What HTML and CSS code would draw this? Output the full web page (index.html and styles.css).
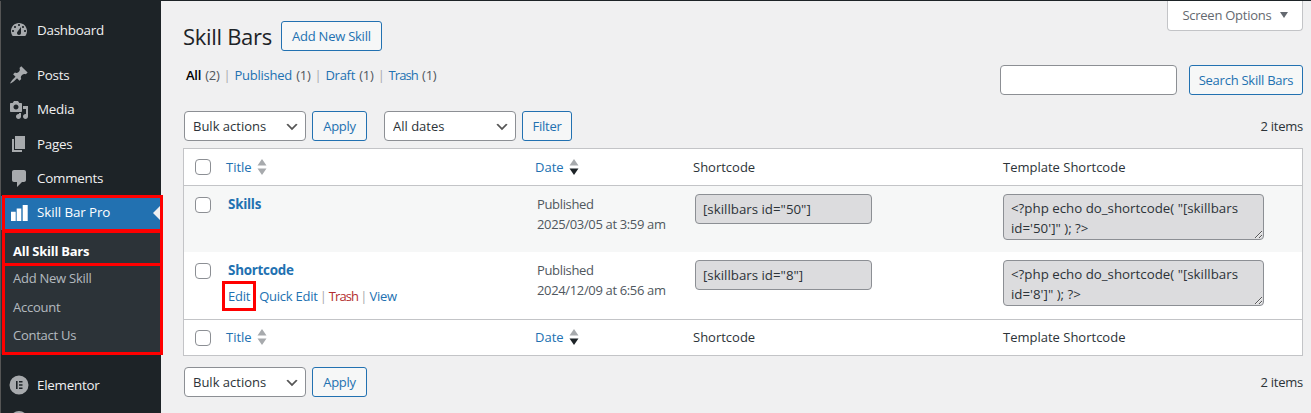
FILE: index.html
```html
<!DOCTYPE html>
<html lang="en">
<head>
<meta charset="utf-8">
<title>Skill Bars</title>
<link rel="stylesheet" href="styles.css">
</head>
<body>
<div class="shell">
  <nav class="sidebar">
    <ul class="menu">
      <li class="item first"><svg class="ico" viewBox="0 0 20 20"><path fill-rule="evenodd" d="M3.76 16h12.48c1.1-1.37 1.76-3.11 1.76-5 0-4.42-3.58-8-8-8s-8 3.58-8 8c0 1.89.66 3.63 1.76 5zM10 4c.55 0 1 .45 1 1s-.45 1-1 1-1-.45-1-1 .45-1 1-1zM6 6c.55 0 1 .45 1 1s-.45 1-1 1-1-.45-1-1 .45-1 1-1zm8 0c.55 0 1 .45 1 1s-.45 1-1 1-1-.45-1-1 .45-1 1-1zm-5.37 5.55L12 7v6c0 1.1-.9 2-2 2s-2-.9-2-2c0-.57.24-1.08.63-1.45zM4 10c.55 0 1 .45 1 1s-.45 1-1 1-1-.45-1-1 .45-1 1-1zm12 0c.55 0 1 .45 1 1s-.45 1-1 1-1-.45-1-1 .45-1 1-1z"/></svg><span>Dashboard</span></li>
      <li class="item gap"><svg class="ico" viewBox="0 0 20 20"><path d="M10.44 3.02l1.82-1.82 6.36 6.35-1.83 1.82c-1.05-.68-2.48-.57-3.41.36l-.75.75c-.92.93-1.04 2.35-.35 3.41l-1.83 1.82-2.41-2.41-2.8 2.79c-.42.42-3.38 2.71-3.8 2.29s1.86-3.39 2.28-3.81l2.79-2.79L4.1 9.36l1.83-1.82c1.05.69 2.48.57 3.4-.36l.75-.75c.93-.92 1.05-2.35.36-3.41z"/></svg><span>Posts</span></li>
      <li class="item"><svg class="ico" viewBox="0 0 20 20"><path fill-rule="evenodd" d="M13 11V4c0-.55-.45-1-1-1h-1.67L9 1H5L3.67 3H2c-.55 0-1 .45-1 1v7c0 .55.45 1 1 1h10c.55 0 1-.45 1-1zM7 4.500c1.38 0 2.5 1.12 2.5 2.5S8.38 9.500 7 9.500 4.500 8.38 4.500 7 5.620 4.500 7 4.500zM14 6h5v10.500c0 1.38-1.12 2.5-2.5 2.5S14 17.880 14 16.500s1.120-2.500 2.500-2.500c.17 0 .34.02.5.05V9h-3V6zm-4 8.050V13h2v3.500c0 1.380-1.120 2.500-2.500 2.500S7 17.880 7 16.500 8.120 14 9.500 14c.17 0 .34.020.5.050z"/></svg><span>Media</span></li>
      <li class="item"><svg class="ico" viewBox="0 0 20 20"><path d="M6 15V2h10v13H6zm-1 1h8v2H3V5h2v11z"/></svg><span>Pages</span></li>
      <li class="item"><svg class="ico" viewBox="0 0 20 20"><path d="M5 2h10c1.1 0 2 .9 2 2v8c0 1.1-.9 2-2 2h-2l-5 5v-5H5c-1.1 0-2-.9-2-2V4c0-1.1.9-2 2-2z"/></svg><span>Comments</span></li>
      <li class="item current"><svg class="ico" viewBox="0 0 20 20"><path d="M2 8.700h4.700V18H2zM7.700 5.600h4.600V18H7.700zM13.700 2h5v16h-5z"/></svg><span class="wide">Skill Bar Pro</span></li>
      <li class="submenu">
        <ul>
          <li class="sub active">All Skill Bars</li>
          <li class="sub">Add New Skill</li>
          <li class="sub">Account</li>
          <li class="sub">Contact Us</li>
        </ul>
      </li>
      <li class="item after-sub"><svg class="ico" viewBox="0 0 20 20"><path fill-rule="evenodd" d="M10 .5a9.500 9.500 0 1 0 0 19 9.500 9.500 0 0 0 0-19zM7 6h1.600v8H7zM10 6h3.500v1.600H10zM10 9.200h3.500v1.600H10zM10 12.400h3.500V14H10z"/></svg><span>Elementor</span></li>
      <li class="item"><svg class="ico" viewBox="0 0 20 20"><circle cx="10" cy="10" r="9"/></svg><span></span></li>
    </ul>
  </nav>

  <main class="content">
    <div class="screen-tab">Screen Options <i class="tri"></i></div>

    <header class="heading">
      <h1>Skill Bars</h1>
      <a class="btn add-new">Add New Skill</a>
    </header>

    <div class="views-row">
      <ul class="views">
        <li><b>All</b> <em>(2)</em></li>
        <li><a>Published</a> <em>(1)</em></li>
        <li><a>Draft</a> <em>(1)</em></li>
        <li><a class="narrow">Trash</a> <em>(1)</em></li>
      </ul>
      <form class="search">
        <input class="field search-input" type="text" aria-label="Search">
        <a class="btn search-btn">Search Skill Bars</a>
      </form>
    </div>

    <div class="tablenav top">
      <select class="field select bulk"><option>Bulk actions</option></select>
      <a class="btn apply">Apply</a>
      <select class="field select dates"><option>All dates</option></select>
      <a class="btn filter">Filter</a>
      <span class="count">2 items</span>
    </div>

    <table class="list">
      <colgroup><col class="c-cb"><col class="c-title"><col class="c-date"><col class="c-code"><col class="c-tpl"></colgroup>
      <thead>
        <tr>
          <td class="cb"><span class="check"></span></td>
          <th><a>Title</a><svg class="sort" viewBox="0 0 10 16"><path class="off" d="M5 0l4.500 6.500H.5zM5 16L.5 9.500h9z"/></svg></th>
          <th><a>Date</a><svg class="sort" viewBox="0 0 10 16"><path class="off" d="M5 0l4.500 6.500H.5z"/><path class="on" d="M5 16L.5 9.500h9z"/></svg></th>
          <th>Shortcode</th>
          <th>Template Shortcode</th>
        </tr>
      </thead>
      <tbody>
        <tr class="alt">
          <td class="cb"><span class="check"></span></td>
          <td class="name"><a class="row-title">Skills</a></td>
          <td class="date">Published<br>2025/03/05 at 3:59 am</td>
          <td><input class="code" type="text" readonly value='[skillbars id="50"]'></td>
          <td><textarea class="tpl" readonly>&lt;?php echo do_shortcode( "[skillbars
id='50']" ); ?&gt;</textarea></td>
        </tr>
        <tr class="second">
          <td class="cb"><span class="check"></span></td>
          <td class="name">
            <a class="row-title">Shortcode</a>
            <div class="actions"><a class="edit">Edit</a> <a>Quick Edit</a> <s>|</s> <a class="trash narrow">Trash</a> <s>|</s> <a>View</a></div>
          </td>
          <td class="date">Published<br>2024/12/09 at 6:56 am</td>
          <td><input class="code" type="text" readonly value='[skillbars id="8"]'></td>
          <td><textarea class="tpl" readonly>&lt;?php echo do_shortcode( "[skillbars
id='8']" ); ?&gt;</textarea></td>
        </tr>
      </tbody>
      <tfoot>
        <tr>
          <td class="cb"><span class="check"></span></td>
          <th><a>Title</a><svg class="sort" viewBox="0 0 10 16"><path class="off" d="M5 0l4.500 6.500H.5zM5 16L.5 9.500h9z"/></svg></th>
          <th><a>Date</a><svg class="sort" viewBox="0 0 10 16"><path class="off" d="M5 0l4.500 6.500H.5z"/><path class="on" d="M5 16L.5 9.500h9z"/></svg></th>
          <th>Shortcode</th>
          <th>Template Shortcode</th>
        </tr>
      </tfoot>
    </table>

    <div class="tablenav bottom">
      <select class="field select bulk"><option>Bulk actions</option></select>
      <a class="btn apply">Apply</a>
      <span class="count">2 items</span>
    </div>
  </main>
</div>
</body>
</html>
```
FILE: styles.css
```css
* { box-sizing: border-box; }
html, body { margin: 0; height: 100%; overflow: hidden; }
body {
  background: #f0f0f1;
  color: #2c3338;
  font: 13px/1.4 "Open Sans", "Liberation Sans", sans-serif;
  letter-spacing: -0.25px;
}
ul { list-style: none; margin: 0; padding: 0; }
a { color: #2271b1; }
.narrow { letter-spacing: -0.9px; }
.wide { letter-spacing: -0.1px; }

.shell { display: flex; height: 413px; border-top: 1px solid #1d2327; overflow: hidden; }

/* sidebar */
.sidebar { width: 161px; flex: none; background: #1d2327; border-left: 1px solid #555; color: #f0f0f1; position: relative; }
.menu { padding-top: 12px; }
.item { display: flex; align-items: center; height: 34.33px; font-size: 13.4px; position: relative; }
.item.gap { margin-top: 11px; }
.item .ico { width: 20px; height: 20px; margin: 0 8px 0 8px; flex: none; fill: #a7aaad; }
.item.current { background: #2271b1; color: #fff; }
.item.current .ico { fill: #fff; }
.item.current::before {
  content: ""; position: absolute; right: 0; top: 50%; margin-top: -8px;
  border: 8px solid transparent; border-right-color: #f0f0f1; border-left: 0;
}
.item.current::after { content: ""; position: absolute; inset: -1px -2px -2px 1px; border: 3px solid #f00; }
.submenu { background: #2c3338; padding: 7px 0 4.4px; position: relative; }
.submenu::after { content: ""; position: absolute; inset: 0 -2px -1px 1px; border: 3px solid #f00; }
.sub { height: 28.6px; line-height: 28.4px; padding-left: 12px; color: rgba(240,246,252,.7); }
.sub.active { height: 27px; color: #fff; font-weight: 700; position: relative; }
.sub.active::after { content: ""; position: absolute; left: 3px; right: 0; bottom: -2px; height: 2.500px; background: #f00; }
.item.after-sub { margin-top: 14px; }

/* content */
.content { flex: 1; min-width: 0; padding: 0 8px 0 22px; position: relative; }
.screen-tab {
  position: absolute; top: -1px; right: 8px; width: 136px; height: 31px;
  background: #fff; border: 1px solid #c3c4c7; border-top: 0; border-radius: 0 0 4px 4px;
  color: #646970; padding-top: 6px; text-align: center;
}
.tri { display: inline-block; border: 4.500px solid transparent; border-top: 6px solid #646970; border-bottom: 0; margin-left: 5px; vertical-align: 2px; }

.heading { display: flex; align-items: center; height: 30px; margin-top: 20px; gap: 9px; }
h1 { margin: 0; font-size: 22px; font-weight: 400; color: #1d2327; line-height: 30px; letter-spacing: -0.3px; }

.btn {
  display: inline-flex; align-items: center; justify-content: center; height: 30px; padding: 0 10px;
  border: 1px solid #2271b1; border-radius: 3px; background: #f6f7f7; color: #2271b1; white-space: nowrap;
}
.add-new { width: 101px; padding: 0; }
.search-btn { width: 114px; padding: 0; }
.filter { width: 50px; padding: 0; }

.views-row { display: flex; justify-content: space-between; height: 30px; margin-top: 14px; }
.views { display: flex; padding: 0 0 0 3px; line-height: 20px; }
.views li + li::before { content: "|"; color: #a7aaad; margin: 0 4px; }
.views b { color: #000; font-weight: 600; }
.views em { font-style: normal; color: #50575e; margin-left: 1px; }
.search { display: flex; gap: 12px; }
.search-input { width: 177px; height: 30px; }
.field { background: #fff; border: 1px solid #8c8f94; border-radius: 4px; color: #2c3338; font: inherit; letter-spacing: inherit; }

.tablenav { display: flex; align-items: center; height: 30px; padding-left: 1px; }
.tablenav.top { margin-top: 16px; }
.tablenav.bottom { margin-top: 11px; }
.select {
  appearance: none; height: 30px; padding: 0 24px 0 8px; letter-spacing: 0;
  background: #fff url("data:image/svg+xml,%3Csvg xmlns='http://www.w3.org/2000/svg' viewBox='0 0 20 20'%3E%3Cpath d='M5 6l5 5 5-5 2 1-7 7-7-7z' fill='%23555'/%3E%3C/svg%3E") no-repeat right 5px top 55%/16px 16px;
}
.bulk { width: 122px; margin-right: 6px; }
.apply { width: 55px; }
.dates { width: 132px; margin: 0 6px 0 17px; }
.count { margin-left: auto; color: #2c3338; }

/* table */
.list { width: 100%; table-layout: fixed; border-collapse: separate; border-spacing: 0; margin-top: 7px; background: #fff; border: 1px solid #c3c4c7; }
.c-cb { width: 34px; }
.c-title { width: 309px; }
.c-date { width: 158px; }
.c-code { width: 310px; }
.list th, .list td { padding: 0 8px; text-align: left; font-weight: 400; vertical-align: top; }
.list th { letter-spacing: 0; }
thead th, thead td, tfoot th, tfoot td { vertical-align: middle !important; }
thead th, thead td { height: 37px; border-bottom: 1px solid #c3c4c7; }
tfoot th, tfoot td { border-top: 1px solid #c3c4c7; height: 36px; }
.list th svg.sort { width: 10px; height: 16px; margin-left: 5px; vertical-align: -3px; }
.off { fill: #a7aaad; }
.on { fill: #1d2327; }
.cb { padding: 0 !important; }
.check { display: block; width: 16px; height: 16px; margin-left: 11px; background: #fff; border: 1px solid #8c8f94; border-radius: 4px; }
tbody .check { margin-top: 11px; }
tbody td { height: 66px; padding-top: 8px !important; }
.second td { height: 67px; }
tbody td.cb { padding-top: 0 !important; }
.alt td { background: #f6f7f7; }
.name { padding-left: 10px !important; }
.row-title { font-weight: 700; font-size: 13.400px; display: block; line-height: 20px; }
.actions { margin-top: 6px; line-height: 20px; white-space: nowrap; }
.actions s { text-decoration: none; color: #a7aaad; margin: 0 -1px; }
.actions .edit { position: relative; margin-right: 6px; }
.actions .edit::after { content: ""; position: absolute; left: -6px; right: -6px; top: -6px; bottom: -6px; border: 3px solid #f00; }
.trash { color: #b32d2e; }
.date { padding-left: 10px !important; line-height: 20px; color: #50575e; letter-spacing: -0.35px; }
.code, .tpl { background: #dcdcde; border: 1px solid #8c8f94; border-radius: 4px; color: #2c3338; font: inherit; font-size: 13.3px; letter-spacing: 0; }
.code { width: 177px; height: 30px; padding: 0 7px; margin: 0 0 0 2px; display: block; }
.tpl { width: 261px; height: 46px; padding: 3px 7px; line-height: 20px; margin: 0; display: block; overflow: hidden; }
```
